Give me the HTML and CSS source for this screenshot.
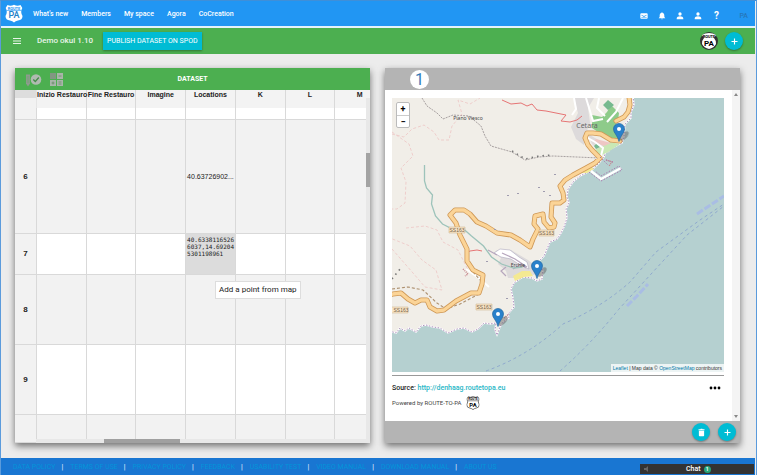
FILE: index.html
```html
<!DOCTYPE html>
<html lang="en">
<head>
<meta charset="utf-8">
<meta name="viewport" content="width=device-width, initial-scale=1">
<title>Demo okul 1.10</title>
<link rel="stylesheet" href="styles.css">
</head>
<body>
<svg class="defs" aria-hidden="true">
  <symbol id="shield" viewBox="0 0 18 19">
    <path d="M2.500 1 Q5.500 2.600 9 .8 Q12.500 2.600 15.500 1 L17.300 4 Q15 8 17.500 12 Q17.500 16 13 16.500 Q10.500 17 9 18.500 Q7.500 17 5 16.500 Q.5 16 .5 12 Q3 8 .7 4Z"/>
  </symbol>
  <symbol id="person" viewBox="0 0 24 24"><path d="M12 11a5 5 0 1 0 0-10 5 5 0 0 0 0 10Zm0 2c-5 0-10 2-10 7v2h20v-2c0-5-5-7-10-7Z"/></symbol>
  <symbol id="plus" viewBox="0 0 24 24"><path d="M10.500 4h3v6.500H20v3h-6.500V20h-3v-6.500H4v-3h6.500Z"/></symbol>
  <symbol id="pin" viewBox="0 0 12 19">
    <path d="M6 18.500 Q5.300 15 2.500 11 Q.5 8.500 .5 6 A5.500 5.500 0 0 1 11.500 6 Q11.500 8.500 9.500 11 Q6.700 15 6 18.500Z" fill="#2a81cb" stroke="#2468a0" stroke-width=".7"/>
    <circle cx="6" cy="6" r="2" fill="#fff"/>
  </symbol>
</svg>

<header class="topbar">
  <a class="logo" href="#" aria-label="Home">
    <svg width="18" height="19" viewBox="0 0 18 19"><use href="#shield" width="18" height="19" fill="#fff"/><path d="M1.500 6.500H16.500" stroke="#2196f3" stroke-width=".6"/><text x="9" y="5.500" class="logo-route" fill="#2196f3">ROUTE</text><text x="9" y="14" class="logo-pa" fill="#2381c8">PA</text></svg>
  </a>
  <nav class="menu">
    <a href="#">What's new</a><a href="#">Members</a><a href="#">My space</a><a href="#">Agora</a><a href="#">CoCreation</a>
  </nav>
  <div class="tools">
    <button aria-label="Messages"><svg viewBox="0 0 24 24"><path fill-rule="evenodd" d="M4 4h16a3 3 0 0 1 3 3v10a3 3 0 0 1-3 3H4a3 3 0 0 1-3-3V7a3 3 0 0 1 3-3Zm0 4v2l8 5 8-5V8l-8 4Zm0 8v1h16v-1Z"/></svg></button>
    <button aria-label="Notifications"><svg viewBox="0 0 24 24"><path d="M10 3a2 2 0 0 1 4 0c4 1 5 4 5 8v4l3 4H2l3-4v-4c0-4 1-7 5-8Zm-1 17h6q-3 4-6 0Z"/></svg></button>
    <button aria-label="Friends"><svg><use href="#person"/></svg></button>
    <button aria-label="Profile"><svg><use href="#person"/></svg></button>
    <button class="help" aria-label="Help">?</button>
    <span class="user">PA</span>
  </div>
</header>

<div class="roombar">
  <button class="burger" aria-label="Menu"><svg width="10" height="8" viewBox="0 0 10 8"><path d="M1 1.500h8M1 4h8M1 6.500h8" stroke="#e8f5e9" stroke-width="1"/></svg></button>
  <h1>Demo okul 1.10</h1>
  <button class="publish">PUBLISH DATASET ON SPOD</button>
  <div class="room-actions">
    <svg width="18" height="18" viewBox="0 0 18 18" role="img" aria-label="Member"><circle cx="9" cy="9" r="9" fill="#333"/><path d="M2 3Q5 1 9 1T16 3L14 6Q16 8 16 12Q14 16 9 17Q4 16 2 12Q2 8 4 6Z" fill="#fff"/><text x="9" y="6" class="logo-route">ROUTE</text><text x="9" y="14" class="badge-pa">PA</text></svg>
    <button class="round" aria-label="Add"><svg><use href="#plus"/></svg></button>
  </div>
</div>

<main class="room">
  <section class="panel">
    <div class="panel-head dataset-head">
      <svg class="dataset-icons" width="42" height="15" viewBox="0 0 42 15">
        <path d="M3 2.500h4v9l-2 3-2-3Z" fill="#8f9a8f"/><path d="M4.300 4v7M5.700 4v7" stroke="#68a96b" stroke-width=".5"/>
        <circle cx="13" cy="7.500" r="5.300" fill="#b0bab0"/><path d="m10.300 7.500 2 2 3.500-4" fill="none" stroke="#458c49" stroke-width="1.300"/>
        <path d="M27 1h6v6h-6Z" fill="#829782"/><path d="M34 1h6v6h-6ZM27 8h6v6h-6ZM34 8h6v6h-6Z" fill="#a9b5a9"/>
        <path d="M35.500 4h3M35.500 10h3M35.500 12h3M30 9.500v3M28.500 11h3" stroke="#648c66" stroke-width=".8"/>
      </svg>
      <h2>DATASET</h2>
    </div>
    <div class="sheet">
      <table>
        <colgroup><col class="c-num"><col><col><col><col><col><col><col></colgroup>
        <thead><tr><th class="corner"></th><th>Inizio Restauro</th><th>Fine Restauro</th><th>Imagine</th><th>Locations</th><th>K</th><th>L</th><th>M</th></tr></thead>
        <tbody>
          <tr class="r-short"><th></th><td></td><td></td><td></td><td></td><td></td><td></td><td></td></tr>
          <tr class="r-tall alt"><th>6</th><td></td><td></td><td></td><td>40.63726902...</td><td></td><td></td><td></td></tr>
          <tr class="r-edit"><th>7</th><td></td><td></td><td></td><td class="active">40.6338116526<br>6037,14.69204<br>5301198961</td><td></td><td></td><td></td></tr>
          <tr class="r-mid alt"><th>8</th><td></td><td></td><td></td><td class="anchor"><span class="tip" role="tooltip">Add a point from map</span></td><td></td><td></td><td></td></tr>
          <tr class="r-mid"><th>9</th><td></td><td></td><td></td><td></td><td></td><td></td><td></td></tr>
          <tr class="r-last alt"><th></th><td></td><td></td><td></td><td></td><td></td><td></td><td></td></tr>
        </tbody>
      </table>
      <div class="vbar"><span></span></div>
      <div class="hbar"><span></span></div>
    </div>
  </section>

  <section class="panel chart">
    <div class="panel-head chart-head"><span class="step">1</span></div>
    <div class="chart-body">
      <div class="chart-main">
        <div class="map">
          <svg class="map-art" viewBox="392 98 332 274" preserveAspectRatio="xMaxYMid slice" role="img" aria-label="Map of the coast">
            <path fill="#b5d0d0" d="M392 98H724V372H392Z"/>
            <path id="land" fill="#f1eee8" stroke="#fff" stroke-width="1.500" d="M390 96H633L634 105 631 112 631 118 625 124 624 136 622 143 614 147 606 151 604 157 599 163 592 170 580 176 573 182 568 189 567 197 569 203 566 209 567 218 564 227 561 233 557 239 550 242 547 249 544 256 539 261 543 270 542 279 537 281 532 278 523 277 514 283 511 289 513 298 514 307 508 314 509 318 503 322 500 327 497 335 495 330 496 323 490 324 484 323 478 329 472 332 464 328 457 329 448 333 440 328 433 327 426 325 421 326 416 332 409 328 405 331 400 328 396 333 390 331Z"/>
            <path fill="none" stroke="#a583b5" stroke-width=".9" stroke-dasharray="1.500 1.500" d="M633 96L634 105 631 112 631 118 625 124 624 136 622 143 614 147 606 151 604 157 599 163 592 170 580 176 573 182 568 189 567 197 569 203 566 209 567 218 564 227 561 233 557 239 550 242 547 249 544 256 539 261 543 270 542 279 537 281 532 278 523 277 514 283 511 289 513 298 514 307 508 314 509 318 503 322 500 327 497 335 495 330 496 323 490 324 484 323 478 329 472 332 464 328 457 329 448 333 440 328 433 327 426 325 421 326 416 332 409 328 405 331 400 328 396 333 390 331"/>
            <path fill="#dddadb" d="M574 98h20l-6 10 2 15-4 10-2 12-8-6-5-12 7-14ZM497 250l14 0 17 10 9 7-2 8-12-1-8 4-7 0-2-7-8-7 3-6-7-5ZM588 134l14 8 8 10-8 2-10-10Z"/>
            <path fill="#8ecb8a" d="M611 105l8 8-1 8-3 5 5 16-16-6-12-8 0-13 10 2 5-5Z"/>
            <path fill="#c8e8b5" d="m610 142 10 2-12 8-8 4-5-6Z"/>
            <path fill="#76b98f" d="m608 100 6 5-6 5-5-5Zm-11 43 3 4-4 2-2-3Z"/>
            <path fill="#f4e992" d="m513 276 9-5 8 0 3 5-9 1-9 4ZM579 173l11-7 4 3-7 4Z"/>
            <path fill="#eec7c4" d="m596 139 15 4-7 3-11-4Z"/>
            <path fill="none" stroke="#fff" stroke-width="2" d="M574 98l2 11-4 6M586 98l4 13 3 10 10-2M599 98l-2 10 8 8M623 98l-7 14-9 10M586 137l9 5 8 6-2 8M466 269l14 10 9 8"/>
            <path fill="#fff" stroke="#aca7bd" stroke-width=".6" d="M500 249l10 1 9 7 8 5 2 7-9-4-9-6-10-2-7-4Z"/>
            <path fill="none" stroke="#b6a6bd" stroke-width="1.200" d="M502 253l13 6 12 8M506 267l-5 4 5 5M488 250l9 5M513 269l8-5 5 4"/>
            <path fill="none" stroke="#9dc3ba" stroke-width="1.300" d="M424.500 165v16l2 7 6 7-1 9 4 12 7 8 10 5 11 0 8 7 12 10 8 11 10 7 12 4 9-1"/>
            <path fill="none" stroke="#a7a0a0" stroke-width="1" stroke-dasharray="2 1" d="m422 98 5 8 10 7 6 6 10-4 16 1 12 10 4 10 6 10 21 6 13 8 14-3 14-1 47 2"/>
            <path fill="none" stroke="#777" stroke-width="1.600" stroke-dasharray="1.500 4" d="m512 151 13 8 14-3 14-1M392 279l8-10"/>
            <path fill="none" stroke="#e67575" stroke-width="1" d="m502 100 9 4 10-1 6 3 5-2 5 6 9 1 20 4-5 6 9 1 7-2 5-4M466 253l4-2 7-1 5 1"/>
            <path fill="none" stroke="#edc5c4" stroke-width=".8" stroke-dasharray="3 2" d="M392 134l12 3 8-8 12-4 10 7 5 8 10 0 3-14 10-12-4-14 12 4 10-6M392 132l17 12 4 12-12 12 5 14-1 21-8 6-5 0M406 228l19-2 12 4 6 12 15 8 10 20M392 249l21 24 12 14 17 3-6-20-14-10-12-14-20-8"/>
            <path fill="none" stroke="#ad906f" stroke-width="1.100" stroke-dasharray="3 2" d="M392 289l16-2 15 3 14 13 9 6 14-5 19-10 2-13-8-9"/>
            <path fill="none" stroke="#c5838a" stroke-width="1.400" stroke-dasharray="1 1" d="m463 269 5 5-3 2M504 318l5-4M606 160l6 2-3 4"/>
            <g fill="none" stroke-linejoin="round" stroke-linecap="round">
              <path id="road" stroke="#cf9856" stroke-width="5" d="M629 97l1 8-2 7-4 5-8 4M620 141l-9-1-10-6-8-1-6 0-2 5 3 7 4 5 8 8-5 5-9 5-13 7-8 5-5 6 3 7 1 7-4 3-8 0-1 14 4 6-1 4-5 1-5-6-1-8-8 2-1 8 4 5-5 10-3 8-10-7-9-5-14-2-11-7-9-4-7-8-6-4-9 0-5 5 6 8 4 12 7 14 0 12 6 9 10 5-1 9-3 9-8 0-15 8-12 9-7 1-7-4-3-7-6 0-6 3-7-4-7-6-8 1-9 3"/>
              <path stroke="#fbd497" stroke-width="3.400" d="M629 97l1 8-2 7-4 5-8 4M620 141l-9-1-10-6-8-1-6 0-2 5 3 7 4 5 8 8-5 5-9 5-13 7-8 5-5 6 3 7 1 7-4 3-8 0-1 14 4 6-1 4-5 1-5-6-1-8-8 2-1 8 4 5-5 10-3 8-10-7-9-5-14-2-11-7-9-4-7-8-6-4-9 0-5 5 6 8 4 12 7 14 0 12 6 9 10 5-1 9-3 9-8 0-15 8-12 9-7 1-7-4-3-7-6 0-6 3-7-4-7-6-8 1-9 3"/>
            </g>
            <path fill="none" stroke="#fff" stroke-width="2.500" d="m591 171 10 8 20-11"/>
            <path fill="none" stroke="#aa7caf" stroke-width="1" stroke-dasharray="1.500 1.500" d="m589 172 12 9 21-11-3-4-18 10-6-5M600 157l8 8M606 160l7 2"/>
            <g fill="none" stroke="#8fa9ce" stroke-width="1" stroke-dasharray="3 3"><path d="M486 371q42-15 77-47 39-17 67-42l26-30 44-32 24-16M560 371q30-26 59-62l33-36 35-38 37-29"/></g>
            <path fill="none" stroke="#a9bde4" stroke-width="3" stroke-dasharray="7 2" d="m627 306 10-10 11-12M697 214l12-8 15-10"/>
            <path fill="#a09caf" d="M507 195h2v1h-2ZM517 193h2v1h-2ZM538 187h2v1h-2ZM543 191h2v1h-2ZM549 195h2v1h-2ZM554 174h2v1h-2ZM494 229h2v1h-2ZM486 261h2v1h-2ZM506 298h2v1h-2Z"/>
            <g fill="#f8e5c7" stroke="#c9ad86" stroke-width=".5"><path d="M449 227h16v6h-16ZM539 230h15v6h-15ZM476 304h16v6h-16ZM390 307h18v6h-18Z"/></g>
            <g class="road-name"><text x="457" y="232">SS163</text><text x="546.500" y="235">SS163</text><text x="484" y="309">SS163</text><text x="401" y="312">SS163</text></g>
            <g class="place"><text x="468" y="120">Piano Viesco</text><text x="518" y="267">Erchie</text><text class="town" x="587" y="128">Cetara</text></g>
            <g fill="#555" opacity=".45"><ellipse cx="624" cy="136" rx="6" ry="3" transform="rotate(-45 624 136)"/><ellipse cx="542" cy="272" rx="6" ry="3" transform="rotate(-45 542 272)"/><ellipse cx="503" cy="321" rx="6" ry="3" transform="rotate(-45 503 321)"/></g>
            <use href="#pin" x="613" y="123" width="12" height="19"/><use href="#pin" x="531" y="260" width="12" height="19"/><use href="#pin" x="492" y="308" width="12" height="19"/>
          </svg>
          <div class="zoomer"><button aria-label="Zoom in">+</button><button aria-label="Zoom out">−</button></div>
          <div class="credit"><a href="#">Leaflet</a> | Map data © <a href="#">OpenStreetMap</a> contributors</div>
        </div>
        <div class="source"><span>Source: <a href="#">http://denhaag.routetopa.eu</a></span><button class="more" aria-label="More"><svg width="12" height="4" viewBox="0 0 12 4"><circle cx="2" cy="2" r="1.400"/><circle cx="6" cy="2" r="1.400"/><circle cx="10" cy="2" r="1.400"/></svg></button></div>
        <div class="powered"><span>Powered by ROUTE-TO-PA</span><svg width="14" height="14" viewBox="0 0 18 19"><use href="#shield" width="18" height="19" fill="#fff" stroke="#444" stroke-width="1"/><path d="M2 6.500h14" stroke="#444" stroke-width=".8"/><text x="9" y="5.500" class="logo-route">ROUTE</text><text x="9" y="14.500" class="badge-pa">PA</text></svg></div>
      </div>
      <div class="gutter" aria-hidden="true"><svg viewBox="0 0 4 3"><path d="M0 3 2 0l2 3Z"/></svg><svg viewBox="0 0 4 3"><path d="M0 0h4L2 3Z"/></svg></div>
    </div>
    <div class="chart-foot">
      <button class="round" aria-label="Delete"><svg viewBox="0 0 24 24"><path d="M5 7h14v13a2 2 0 0 1-2 2H7a2 2 0 0 1-2-2ZM4 3h5l1-1h4l1 1h5v3H4Z"/></svg></button>
      <button class="round" aria-label="Add"><svg><use href="#plus"/></svg></button>
    </div>
  </section>
</main>

<footer class="footer">
  <a href="#">DATA POLICY</a><a href="#">TERMS OF USE</a><a href="#">PRIVACY POLICY</a><a href="#">FEEDBACK</a><a href="#">USABILITY TEST</a><a href="#">VIDEO MANUAL</a><a href="#">DOWNLOAD MANUAL</a><a href="#">ABOUT US</a>
</footer>
<button class="chat"><svg width="6" height="6" viewBox="0 0 6 6"><path d="M0 2h2l2-2v6L2 4H0Z" fill="#666"/></svg><span>Chat</span><b>1</b></button>
</body>
</html>
```
FILE: styles.css
```css
* { box-sizing: border-box; }

body {
  margin: 0;
  min-height: 100vh;
  display: flex;
  flex-direction: column;
  padding-right: 1px;
  border: 1px solid #5b9bdc;
  border-top-color: #3f8fd8;
  background: #ececec;
  font: 7px/10px Roboto, "Liberation Sans", sans-serif;
  color: #222;
}

button {
  padding: 0;
  border: 0;
  background: none;
  font: inherit;
  color: inherit;
}

a { color: inherit; text-decoration: none; }
svg { display: block; }
h1, h2 { margin: 0; font: inherit; }
.defs { position: absolute; width: 0; height: 0; }

.logo-route { font: bold 4px Roboto, sans-serif; text-anchor: middle; }
.logo-pa { font: 500 9px Roboto, sans-serif; text-anchor: middle; }
.badge-pa { font: bold 8px Roboto, sans-serif; text-anchor: middle; }

/* Site bar */
.topbar {
  display: flex;
  align-items: center;
  height: 27px;
  padding: 0 7px 0 4px;
  border-bottom: 2px solid #e3f2fd;
  background: #2196f3;
  color: #fff;
  font-weight: 500;
}
.menu { display: flex; gap: 13px; margin-left: 10px; }
.tools { display: flex; align-items: center; gap: 10px; margin: 4px 0 0 auto; }
.tools svg { width: 8px; height: 8px; fill: #fff; }
.help { width: 8px; font-size: 10px; font-weight: 700; }
.user { margin-left: 9px; color: #2677ba; }

/* Room bar */
.roombar {
  display: flex;
  align-items: center;
  height: 26px;
  padding: 0 12px 0 11px;
  background: #4caf50;
  color: #e8f5e9;
}
.roombar h1 { margin: 0 10px 0 15px; font-size: 8px; font-weight: 500; }
.publish {
  height: 18px;
  padding: 0 4px;
  background: #00bcd4;
  color: #fff;
  box-shadow: 0 1px 2px #0005;
}
.room-actions { display: flex; align-items: center; gap: 7px; margin-left: auto; }
.round {
  display: grid;
  place-items: center;
  width: 18px;
  height: 18px;
  border-radius: 50%;
  background: #00bcd4;
  box-shadow: 0 1px 2px #0005;
}
.round svg { width: 9px; height: 9px; fill: #fff; }

/* Panels */
.room {
  flex: 1;
  display: grid;
  grid-template-columns: 1fr 1fr;
  gap: 15px;
  padding: 14px 15px 15px 14px;
}
.panel {
  display: flex;
  flex-direction: column;
  min-width: 0;
  background: #fff;
  box-shadow: 0 3px 7px #0008;
}
.panel-head { display: flex; align-items: center; height: 22px; }
.dataset-head { position: relative; justify-content: center; background: #4caf50; }
.dataset-head h2 { color: #fff; font-weight: 700; }
.dataset-icons { position: absolute; left: 8px; }

.sheet { position: relative; flex: 1; overflow: hidden; background: #f2f2f2; }
table {
  table-layout: fixed;
  width: 370px;
  border-collapse: separate;
  border-spacing: 0;
  font: 7px/8px "Liberation Sans", Arial, sans-serif;
}
.c-num { width: 22px; }
th, td { padding: 0; border-right: 1px solid #d9d9d9; border-bottom: 1px solid #d9d9d9; text-align: center; white-space: nowrap; }
td { background: #fff; }
tbody th, .alt td { background: #f2f2f2; }
tbody th { font-size: 8px; }
thead th { height: 18px; padding-top: 1px; border-bottom: 0; vertical-align: top; background: #f3f3f3; color: #222; }
thead .corner { border-right-color: #e5e5e5; background: linear-gradient(#ddd 8px, #f2f2f2 8px); }
.r-short { height: 12px; }
.r-tall { height: 114px; }
.r-edit { height: 41px; }
.r-mid { height: 70px; }
.r-last { height: 28px; }
td.active {
  padding: 2px 1px;
  background: #dcdcdc;
  font: 6px/7px "DejaVu Sans Mono", monospace;
  text-align: left;
  vertical-align: top;
}
.anchor { position: relative; }
.tip {
  position: absolute;
  z-index: 2;
  top: 6px;
  left: 29px;
  padding: 4px 3px;
  border: 1px solid #ddd;
  background: #fff;
  font: 8px/8px Roboto, sans-serif;
}
.vbar { position: absolute; top: 8px; right: 0; bottom: 0; width: 4px; padding-top: 55px; background: #e8e8e8; }
.vbar span { display: block; height: 34px; background: #a3a3a3; }
.hbar { position: absolute; left: 21px; right: 4px; bottom: 0; height: 4px; padding-left: 68px; background: #e8e8e8; }
.hbar span { display: block; width: 76px; height: 4px; background: #a0a0a0; }

/* Chart panel */
.chart-head { padding-left: 25px; background: #b4b4b4; }
.step {
  width: 19px;
  height: 19px;
  border-radius: 50%;
  background: #fff;
  color: #337ab7;
  font-size: 16px;
  line-height: 19px;
  text-align: center;
}
.chart-body { flex: 1; display: flex; }
.chart-main { flex: 1; min-width: 0; padding: 8px 8px 0 7px; }
.gutter { display: flex; flex-direction: column; justify-content: space-between; align-items: center; width: 8px; padding: 3px 0; background: #f4f4f4; }
.gutter svg { width: 4px; height: 3px; fill: #888; }
.map { position: relative; }
.map-art { width: 100%; height: 274px; }
.road-name { font: 5px "Liberation Sans", sans-serif; fill: #765e45; text-anchor: middle; }
.place { font: 5px "Noto Sans", sans-serif; fill: #444; text-anchor: middle; }
.town { font-size: 7px; fill: #666; }
.zoomer {
  position: absolute;
  top: 4px;
  left: 4px;
  display: grid;
  border: 1px solid #bbb;
  border-radius: 2px;
  background: #fff;
  color: #000;
  font-size: 9px;
  font-weight: 700;
}
.zoomer button { width: 12px; height: 12px; }
.zoomer button + button { border-top: 1px solid #ccc; }
.credit {
  position: absolute;
  right: 0;
  bottom: 0;
  padding: 0 2px;
  background: #ffffffc0;
  font: 5px/8px "Liberation Sans", Arial, sans-serif;
  color: #333;
}
.credit a { color: #0078a8; }
.source {
  display: flex;
  justify-content: space-between;
  align-items: center;
  margin-top: 3px;
  padding: 7px 3px 3px 0;
  border-top: 1px solid #999;
}
.source span { font-weight: 500; }
.source a { color: #26b6c6; }
.powered { display: flex; align-items: center; gap: 4px; font-size: 6px; }
.powered span { color: #444; }
.chart-foot { display: flex; align-items: center; justify-content: flex-end; gap: 8px; height: 22px; padding-right: 4px; background: #b4b4b4; }

/* Footer */
.footer {
  display: flex;
  align-items: center;
  height: 17px;
  padding-left: 12px;
  background: #1976d2;
  color: #0395d9;
}
.footer a + a::before { content: "|"; margin: 0 7px 0 6px; color: #fff; }
.chat {
  position: fixed;
  right: 3px;
  bottom: 1px;
  display: flex;
  align-items: center;
  width: 114px;
  height: 10px;
  padding: 0 4px;
  background: #333;
  color: #fff;
  font-weight: 500;
}
.chat span { margin-left: 36px; }
.chat b { width: 7px; height: 7px; margin-left: 3px; border-radius: 50%; background: #26a67a; font-size: 5px; line-height: 7px; }
```
